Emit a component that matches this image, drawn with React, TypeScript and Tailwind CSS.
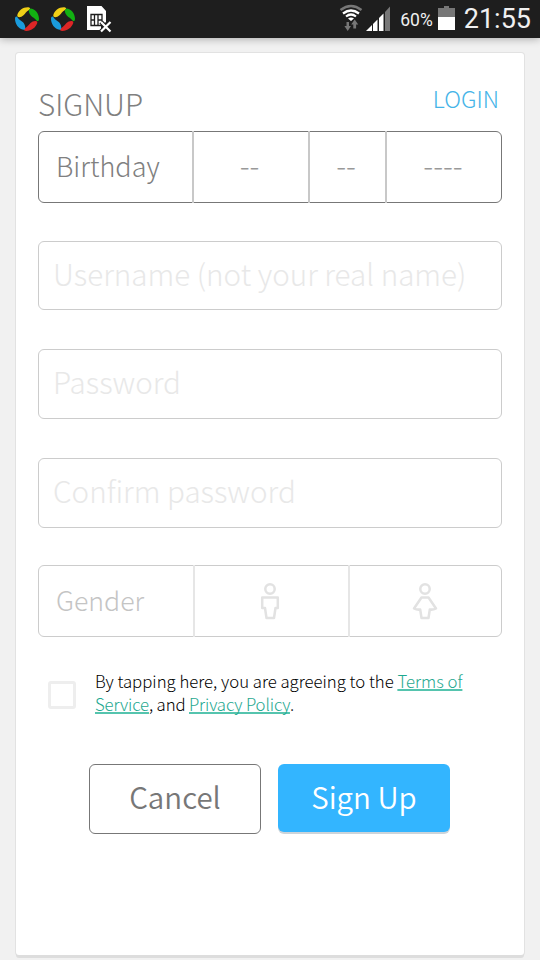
import React, { useState } from 'react';

type Gender = 'male' | 'female' | null;

const SwirlIcon = () => (
  <svg width="26" height="26" viewBox="0 0 26 26" fill="none">
    <path d="M3.300 9C4.500 4.500 9 .8 14.500 1.200C16.500 1.600 16.800 3 15 4C12 5.500 11.500 7.500 9.500 9.300C7 11.800 2.800 12 3.300 9Z" fill="#f0cf17" />
    <path d="M17 2.500C21.500 3.500 25 7.500 25 13C24.800 15.500 23.500 15.800 22.300 14.300C20.800 12 18.700 11.500 17 9.700C14.500 7 14 2.500 17 2.500Z" fill="#12b012" />
    <path d="M23.300 17C21.800 21.500 17.500 25 12 24.900C9.500 24.700 9.300 23.300 11 22.200C13.700 20.500 14.500 18.800 16.500 16.900C19 14.500 23.800 14 23.300 17Z" fill="#dc2626" />
    <path d="M9.500 23.800C4.500 22.700 1 18 1 12.700C1.200 10.300 2.600 10 3.800 11.700C5.300 14 7.300 14.500 9 16.300C11.500 19 12.300 24 9.500 23.800Z" fill="#1a9bdc" />
  </svg>
);

const SimIcon = () => (
  <svg width="26" height="28" viewBox="0 0 26 28" fill="none">
    <path d="M1 0H15.500L20 5V16L15 20V24H1Z" fill="#fff" />
    <path d="M5 8.500H16V19.500H5ZM8.500 8.500V19.500M12 8.500V19.500M5 14H8.500M12 14H16" stroke="#1e1e1e" strokeWidth="1.300" />
    <path d="M15 16L24.500 25.500M24.500 16L15 25.500" stroke="#1e1e1e" strokeWidth="4.500" />
    <path d="M15 16L24.500 25.500M24.500 16L15 25.500" stroke="#fff" strokeWidth="2.200" />
  </svg>
);

const WifiIcon = () => (
  <svg width="24" height="27" viewBox="0 0 24 27" fill="none">
    <path d="M1.500 6Q12 -2 22.500 6" stroke="#777" strokeWidth="2.400" />
    <path d="M4 9.500Q12 3.500 20 9.500" stroke="#fff" strokeWidth="2.300" />
    <path d="M7 12.500Q12 8.500 17 12.500" stroke="#fff" strokeWidth="2.200" />
    <path d="M9 14.500Q12 12.500 15 14.500L12 17Z" fill="#fff" />
    <path d="M7.500 18h2.500v4h2l-3.300 5l-3.300-5h2.100Z" fill="#777" />
    <path d="M14.300 24.500v-4h-2.100l3.500-5l3.500 5h-2.100v4Z" fill="#777" />
  </svg>
);

const SignalIcon = () => (
  <svg width="25" height="25" viewBox="0 0 25 25">
    <path d="M0 25L6 19V25Z" fill="#fff" />
    <path d="M7 18L11.500 13.500V25H7Z" fill="#fff" />
    <path d="M13 12L17.500 7.500V25H13Z" fill="#fff" />
    <path d="M19 6L24 .5V25H19Z" fill="#777" />
  </svg>
);

const BatteryIcon = () => (
  <svg width="17" height="24" viewBox="0 0 17 24">
    <path d="M6 0H11V2H17V11H0V2H6Z" fill="#777" />
    <path d="M0 11H17V24H0Z" fill="#fff" />
  </svg>
);

const MaleIcon = () => (
  <svg width="20" height="38" viewBox="0 0 20 38" fill="none" stroke="currentColor" strokeWidth="2.500" strokeLinejoin="round">
    <circle cx="10" cy="7" r="4.700" />
    <path d="M2.200 15.500H17.800V26H15.500L14 36H6.500L5 26H2.200Z" />
  </svg>
);

const FemaleIcon = () => (
  <svg width="26" height="38" viewBox="0 0 26 38" fill="none" stroke="currentColor" strokeWidth="2.500" strokeLinejoin="round">
    <circle cx="13" cy="7" r="4.700" />
    <path d="M9.500 15.500H16.500L24 26.500Q21 28 17.800 27.500L16.500 36H9.500L8.200 27.500Q5 28 2 26.500Z" />
  </svg>
);

const StatusBar = () => (
  <header className="flex h-[38px] shrink-0 items-start bg-[#1e1e1e] font-['Roboto',sans-serif] text-[#f0f0f0] shadow-[0_1px_8px_rgba(0,0,0,0.3)]">
    <div className="flex gap-2.5 pt-1.5 pl-3.5">
      <SwirlIcon />
      <SwirlIcon />
      <SimIcon />
    </div>
    <div className="ml-auto flex items-start pr-[9px]">
      <div className="mr-[3px] pt-1"><WifiIcon /></div>
      <div className="mr-[9px] pt-1.5"><SignalIcon /></div>
      <span className="mr-[5px] pt-2 text-[17.5px] leading-6">60%</span>
      <div className="mr-[9px] pt-1.5"><BatteryIcon /></div>
      <span className="pt-[3px] text-[27px] leading-8">21:55</span>
    </div>
  </header>
);

interface FieldProps {
  placeholder: string;
  type?: string;
  className: string;
}

const Field: React.FC<FieldProps> = ({ placeholder, type = 'text', className }) => (
  <input
    type={type}
    placeholder={placeholder}
    className={`w-full rounded-md border border-[#ccc] bg-white px-3.5 pb-[5px] text-[29.6px] font-light outline-none placeholder:text-[#e8e8e8] ${className}`}
  />
);

const App: React.FC = () => {
  const [gender, setGender] = useState<Gender>(null);
  const [agreed, setAgreed] = useState(false);

  return (
    <div className="flex h-[960px] w-[540px] flex-col overflow-hidden bg-[#f1f1f1] font-['Noto_Sans_CJK_SC',sans-serif]">
      <StatusBar />
      <main className="mx-4 mt-[15px] h-[902px] rounded-[3px] bg-white px-[22px] shadow-[0_3px_0_#ddd,0_0_0_1px_#e2e2e2]">
        <div className="flex h-[78px] justify-between">
          <h1 className="pt-[31px] text-[29.6px] leading-10 font-light text-[#808080]">SIGNUP</h1>
          <button className="mt-[29px] mr-[3px] h-8 text-[23px] leading-8 font-light text-[#45b4e8]">LOGIN</button>
        </div>

        <div className="flex h-[72px] rounded-md border border-[#777] text-[27px] font-light text-[#808080]">
          <span className="-my-px flex w-[155px] items-center border-r-2 border-[#c8c8c8] pb-0.5 pl-[17px]">Birthday</span>
          <button className="-my-px w-[116px] border-r-2 border-[#c8c8c8] pr-[3px] pb-1.5 text-[29.5px] text-[#999]">--</button>
          <button className="-my-px w-[77px] border-r-2 border-[#c8c8c8] pr-[3px] pb-1.5 text-[29.5px] text-[#999]">--</button>
          <button className="flex-1 pr-0.5 pb-1.5 text-[29.5px] text-[#999]">----</button>
        </div>

        <Field placeholder="Username (not your real name)" className="mt-[38px] h-[69px]" />
        <Field placeholder="Password" type="password" className="mt-[39px] h-[70px]" />
        <Field placeholder="Confirm password" type="password" className="mt-[39px] h-[70px]" />

        <div className="mt-[37px] flex h-[72px] rounded-md border border-[#ccc] text-[26.7px] font-light text-[#c4c4c4]">
          <span className="-my-px flex w-[156px] items-center border-r-2 border-[#e6e6e6] pb-0.5 pl-[17px]">Gender</span>
          <button
            onClick={() => setGender('male')}
            className={`-my-px flex w-[155px] items-center justify-center border-r-2 border-[#e6e6e6] pr-[3px] ${gender === 'male' ? 'text-[#33b5ff]' : 'text-[#e2e2e2]'}`}
          >
            <MaleIcon />
          </button>
          <button
            onClick={() => setGender('female')}
            className={`flex flex-1 items-center justify-center pr-0.5 ${gender === 'female' ? 'text-[#33b5ff]' : 'text-[#e2e2e2]'}`}
          >
            <FemaleIcon />
          </button>
        </div>

        <div className="mt-[33px] flex h-[46px] pl-[10px]">
          <button
            onClick={() => setAgreed(!agreed)}
            className={`mt-[11px] size-[28px] shrink-0 rounded-[3px] border-3 border-[#eee] ${agreed ? 'bg-[#33b5ff]' : 'bg-white'}`}
          />
          <p className="ml-[19px] text-[16.75px] leading-[23px] font-light whitespace-nowrap text-black">
            By tapping here, you are agreeing to the <a className="text-[#1ea88f] underline decoration-[#55c4ae] decoration-2 underline-offset-1 [text-decoration-skip-ink:none]">Terms of</a>
            <br />
            <span className="tracking-[-0.13px]">
              <a className="text-[#1ea88f] underline decoration-[#55c4ae] decoration-2 underline-offset-1 [text-decoration-skip-ink:none]">Service</a>, and{' '}
              <a className="text-[#1ea88f] underline decoration-[#55c4ae] decoration-2 underline-offset-1 [text-decoration-skip-ink:none]">Privacy Policy</a>.
            </span>
          </p>
        </div>

        <div className="mt-[48px] flex gap-[17px] pl-[51px] text-[29.5px] font-[350]">
          <button className="h-[70px] w-[172px] rounded-md border border-[#777] pb-[5px] text-[#777]">Cancel</button>
          <button className="h-[68px] w-[172px] rounded-md bg-[#33b5ff] pb-[3px] text-white shadow-[0_2px_0_#ccd4da]">Sign Up</button>
        </div>
      </main>
    </div>
  );
};

export default App;
